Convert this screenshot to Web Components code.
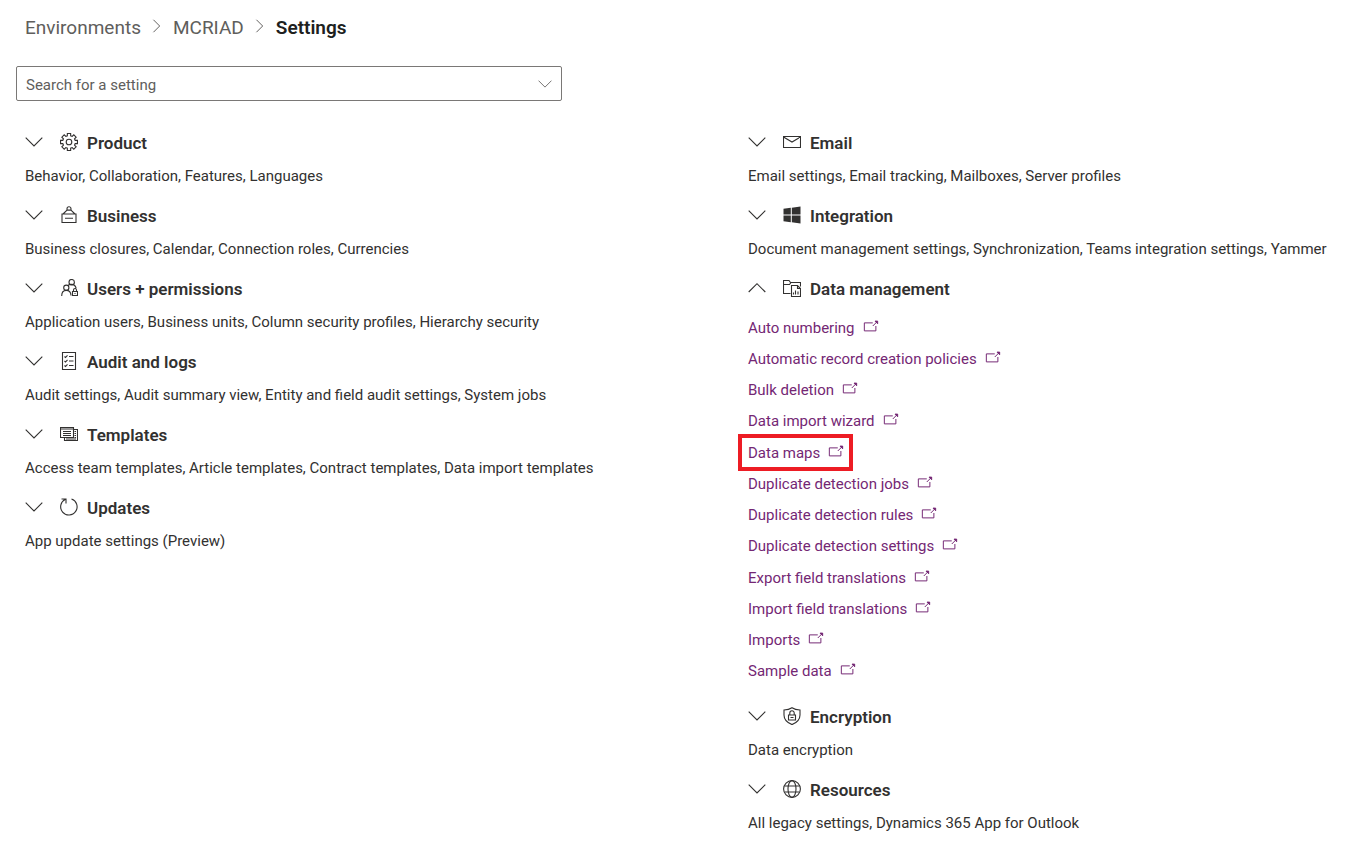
<!DOCTYPE html>
<html lang="en">
<head>
<meta charset="utf-8">
<meta name="viewport" content="width=device-width, initial-scale=1">
<title>Settings</title>
<style>
  body {
    margin: 0;
    background: #fff;
    color: #323130;
    font: 15px/24px Roboto, "Open Sans", sans-serif;
  }
</style>
</head>
<body>
<settings-page>
  <bread-crumb slot="trail">
    <a href="#environments">Environments</a>
    <a href="#mcriad">MCRIAD</a>
    <span aria-current="page">Settings</span>
  </bread-crumb>
  <setting-search slot="search"></setting-search>

  <settings-group slot="left" icon="gear" heading="Product">Behavior, Collaboration, Features, Languages</settings-group>
  <settings-group slot="left" icon="sign" heading="Business">Business closures, Calendar, Connection roles, Currencies</settings-group>
  <settings-group slot="left" icon="users" heading="Users + permissions">Application users, Business units, Column security profiles, Hierarchy security</settings-group>
  <settings-group slot="left" icon="checklist" heading="Audit and logs">Audit settings, Audit summary view, Entity and field audit settings, System jobs</settings-group>
  <settings-group slot="left" icon="templates" heading="Templates">Access team templates, Article templates, Contract templates, Data import templates</settings-group>
  <settings-group slot="left" icon="refresh" heading="Updates">App update settings (Preview)</settings-group>

  <settings-group slot="right" icon="mail" heading="Email">Email settings, Email tracking, Mailboxes, Server profiles</settings-group>
  <settings-group slot="right" icon="windows" heading="Integration">Document management settings, Synchronization, Teams integration settings, Yammer</settings-group>
  <settings-group slot="right" icon="data" heading="Data management" open>
    <link-list>
      <setting-link>Auto numbering</setting-link>
      <setting-link>Automatic record creation policies</setting-link>
      <setting-link>Bulk deletion</setting-link>
      <setting-link>Data import wizard</setting-link>
      <setting-link highlighted>Data maps</setting-link>
      <setting-link>Duplicate detection jobs</setting-link>
      <setting-link>Duplicate detection rules</setting-link>
      <setting-link>Duplicate detection settings</setting-link>
      <setting-link>Export field translations</setting-link>
      <setting-link>Import field translations</setting-link>
      <setting-link>Imports</setting-link>
      <setting-link>Sample data</setting-link>
    </link-list>
  </settings-group>
  <settings-group slot="right" icon="shield" heading="Encryption">Data encryption</settings-group>
  <settings-group slot="right" icon="globe" heading="Resources">All legacy settings, Dynamics 365 App for Outlook</settings-group>
</settings-page>

<script>
// Outline of an eight-toothed gear centred in an 18 x 18 box.
function gearOutline() {
  const points = [];
  for (let i = 0; i < 8; i++) {
    for (const [turn, r] of [[-15, 6.4], [-11, 8.6], [11, 8.6], [15, 6.4]]) {
      const a = (i * 45 + turn) * Math.PI / 180;
      points.push((9 + r * Math.sin(a)).toFixed(2) + ' ' + (9 - r * Math.cos(a)).toFixed(2));
    }
  }
  return 'M' + points.join('L') + 'Z';
}

const ICONS = {
  gear: `<path d="${gearOutline()}"/><circle cx="9" cy="9" r="2.8"/>`,
  sign: '<path d="M2 8h14v8.500H2zM5 12.300h8M3 8l4.300-4.200M15 8l-4.300-4.200M9 .8a2 2 0 0 1 2 2v1.300H7V2.800a2 2 0 0 1 2-2z"/>',
  users: '<circle cx="11.7" cy="3.2" r="2.7"/><circle cx="6.3" cy="8.7" r="2.6"/><path d="M1.7 17c0-3.400 2-5.600 4.600-5.600s4.600 2 4.700 5.200M7.800 6.600c.8-.8 2-1.200 3.500-1.200 2.400 0 4.200 1.400 4.800 3.800M12.500 12.500h5v4h-5zM13.500 12.500v-1.500a1.500 1.500 0 0 1 3 0v1.500M14.500 14.500h1"/>',
  checklist: '<path d="M2.500.5h13v17h-13zM9 4.500h4.500M9 9h4.500M9 13.500h4.500M4.500 4.500l1 1 2-2.200M4.500 9l1 1 2-2.200M4.500 13.500l1 1 2-2.200"/>',
  templates: '<path d="M.5 2.500h13v10H.5zM.5 4h13M3 6.500h8M3 8.500h8M3 10.500h8M13.500 4.500h4v11h-13v-3M14.500 6.500h1.500M14.500 8.500h1.500M14.500 10.500h1.500M14.500 12.500h1.500M6 14h10"/>',
  refresh: '<path d="M5.500 1.300A8.200 8.200 0 1 0 11.500 1M1.500 1h4.500v4.500"/>',
  mail: '<path d="M.5 3.500h17v11H.5zM.5 4l8.500 5 8.500-5"/>',
  windows: '<path fill="currentColor" stroke="none" d="M.5 2.800 7.800 1.800V8.500H.5zM8.800 1.700 17.500.5v8H8.800zM.5 9.500h7.300v6.700L.5 15.200zM8.800 9.500h8.700v8L8.800 16.300z"/>',
  data: '<path d="M7.500 14.500h-7v-13h5.500l1.500 2h10v4M.5 5.500h6l1.500-2M8.500 6.500h6l3 3v8h-9zM14.500 6.500v3h3M10.500 15.500v-2M12.500 15.500v-4M15 15.500v-3"/>',
  shield: '<path d="M9 .7c2.200 1.500 4.800 2.200 8 2.300v5c0 4.500-3 7.600-8 9.600-5-2-8-5.100-8-9.600V3C4.200 2.900 6.800 2.200 9 .7zM5.500 8h7v5h-7zM6.800 8V6a2.200 2.200 0 0 1 4.400 0v2M7.500 10.500h3"/>',
  globe: '<circle cx="9" cy="9" r="8.400"/><ellipse cx="9" cy="9" rx="4" ry="8.400"/><path d="M1.500 6h15M1.500 12h15"/>',
  down: '<path d="M.7 4.700 9 13l8.300-8.300"/>',
  up: '<path d="M.7 13 9 4.700 17.300 13"/>',
  right: '<path d="M5 2 12 9l-7 7"/>',
  external: '<path d="M11 5.500H1.500v9h13V9M11 9l4.500-4.500"/><path fill="currentColor" d="M13.500 3.500h3v3z"/>'
};

class UiIcon extends HTMLElement {
  connectedCallback() {
    this.attachShadow({ mode: 'open' }).innerHTML = `
      <style>
        :host { display: block; flex: none; width: 18px; height: 18px; }
        svg { display: block; width: 100%; height: 100%; fill: none; stroke: currentColor; stroke-width: 1.1; }
      </style>
      <svg viewBox="0 0 18 18" aria-hidden="true">${ICONS[this.getAttribute('name')]}</svg>`;
  }
}

class BreadCrumb extends HTMLElement {
  connectedCallback() {
    const root = this.attachShadow({ mode: 'open' });
    root.innerHTML = `
      <style>
        :host { display: block; color: #605e5c; font-size: 19px; line-height: 28px; }
        nav { display: flex; align-items: center; gap: 8px; }
        ui-icon { width: 16px; height: 16px; padding-bottom: 4px; }
        ::slotted(a) { color: inherit; text-decoration: none; }
        ::slotted([aria-current]) { color: #201f1e; font-weight: 600; }
      </style>
      <nav aria-label="Breadcrumb"></nav>`;
    const nav = root.querySelector('nav');
    [...this.children].forEach((item, i) => {
      item.slot = 'item' + i;
      if (i) {
        const icon = document.createElement('ui-icon');
        icon.setAttribute('name', 'right');
        nav.append(icon);
      }
      const slot = document.createElement('slot');
      slot.name = item.slot;
      nav.append(slot);
    });
  }
}

class SettingSearch extends HTMLElement {
  connectedCallback() {
    this.attachShadow({ mode: 'open' }).innerHTML = `
      <style>
        :host { display: block; max-width: 546px; }
        div { display: flex; box-sizing: border-box; height: 35px; border: 1px solid #7a7876; border-radius: 2px; }
        input { flex: 1; min-width: 0; padding: 2px 9px 0; border: 0; outline: 0; background: none; font: inherit; color: inherit; }
        input::placeholder { color: #605e5c; opacity: 1; }
        button { display: grid; place-items: center; width: 32px; padding: 0; border: 0; background: none; color: #605e5c; }
        ui-icon { width: 14px; height: 14px; }
      </style>
      <div>
        <input type="text" role="combobox" aria-expanded="false" aria-label="Search for a setting" placeholder="Search for a setting">
        <button type="button" aria-label="Show settings"><ui-icon name="down"></ui-icon></button>
      </div>`;
  }
}

class SettingsGroup extends HTMLElement {
  connectedCallback() {
    const open = this.hasAttribute('open');
    this.attachShadow({ mode: 'open' }).innerHTML = `
      <style>
        :host { display: block; }
        h2 { margin: 0 0 4px; font-size: 17px; font-weight: 600; line-height: 33px; }
        button { display: flex; align-items: center; height: 33px; padding: 0; border: 0; background: none; font: inherit; color: inherit; }
        ui-icon { padding-bottom: 4px; }
        .chevron { margin-right: 17px; }
        .symbol { margin-right: 9px; }
      </style>
      <h2><button type="button" aria-expanded="${open}">
        <ui-icon class="chevron" name="${open ? 'up' : 'down'}"></ui-icon>
        <ui-icon class="symbol" name="${this.getAttribute('icon')}"></ui-icon>
        <span>${this.getAttribute('heading')}</span>
      </button></h2>
      <div><slot></slot></div>`;
  }
}

class LinkList extends HTMLElement {
  connectedCallback() {
    this.setAttribute('role', 'list');
    this.attachShadow({ mode: 'open' }).innerHTML = `
      <style>
        :host { display: grid; grid-auto-rows: 1fr; min-height: 375px; padding: 2px 0; }
      </style>
      <slot></slot>`;
  }
}

class SettingLink extends HTMLElement {
  connectedCallback() {
    this.setAttribute('role', 'listitem');
    this.attachShadow({ mode: 'open' }).innerHTML = `
      <style>
        :host { display: flex; }
        a { position: relative; display: flex; align-items: center; gap: 8px; color: #742774; text-decoration: none; }
        ui-icon { width: 16px; height: 16px; padding-bottom: 4px; }
        :host([highlighted]) a::after { content: ""; position: absolute; inset: -3px -9px -3px -10px; border: 4px solid #ed1c24; }
      </style>
      <a href="#setting"><slot></slot><ui-icon name="external"></ui-icon></a>`;
  }
}

class SettingsPage extends HTMLElement {
  connectedCallback() {
    this.attachShadow({ mode: 'open' }).innerHTML = `
      <style>
        :host { display: block; padding: 14px 0 20px; }
        header { padding: 0 16px; }
        slot[name=trail]::slotted(*) { margin: 0 9px 24px; }
        main { display: grid; grid-template-columns: 723fr 598fr; align-items: start; padding: 26px 0 0 25px; }
        section { display: grid; gap: 12px; }
      </style>
      <header><slot name="trail"></slot><slot name="search"></slot></header>
      <main>
        <section><slot name="left"></slot></section>
        <section><slot name="right"></slot></section>
      </main>`;
  }
}

customElements.define('ui-icon', UiIcon);
customElements.define('bread-crumb', BreadCrumb);
customElements.define('setting-search', SettingSearch);
customElements.define('settings-group', SettingsGroup);
customElements.define('link-list', LinkList);
customElements.define('setting-link', SettingLink);
customElements.define('settings-page', SettingsPage);
</script>
</body>
</html>
